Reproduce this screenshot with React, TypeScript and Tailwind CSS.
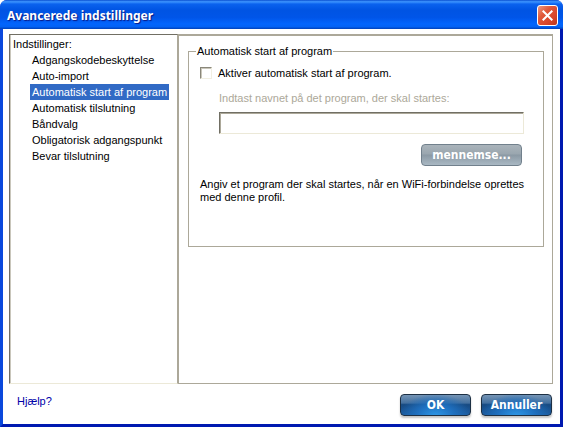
import { useState } from "react";

const pages = [
  "Adgangskodebeskyttelse",
  "Auto-import",
  "Automatisk start af program",
  "Automatisk tilslutning",
  "Båndvalg",
  "Obligatorisk adgangspunkt",
  "Bevar tilslutning",
];

function TitleBar() {
  return (
    <header className="flex h-[29px] shrink-0 items-center justify-between rounded-t-[7px] bg-[linear-gradient(180deg,#0a4fd0_0%,#3d95ff_6%,#0a62ee_14%,#0054e3_35%,#0055e8_60%,#0265fd_82%,#0262f5_92%,#0040b8_100%)] pl-[7px] pr-[5px] pt-[2px]">
      <h1 className="font-['Noto_Sans','Open_Sans',sans-serif] text-[12px] font-bold leading-4 text-white [text-shadow:1px_1px_1px_#0a1883]">
        Avancerede indstillinger
      </h1>
      <button
        type="button"
        aria-label="Luk"
        className="flex h-[21px] w-[21px] items-center justify-center rounded-[3px] border border-white bg-[linear-gradient(135deg,#ec9a83_0%,#e0593a_35%,#d8452a_70%,#b9361c_100%)]"
      >
        <svg viewBox="0 0 11 11" className="h-[11px] w-[11px]" fill="none" stroke="#fff" strokeWidth="2">
          <path d="M0.7 0.7 10.3 10.3M10.3 0.7 0.7 10.3" />
        </svg>
      </button>
    </header>
  );
}

function PageList({ selected, onSelect }: { selected: string; onSelect: (page: string) => void }) {
  return (
    <nav className="w-[169px] shrink-0 border border-b-[#ece9d8] border-l-[#716f64] border-r-[#aca899] border-t-[#716f64] pl-[3px] pt-[1px] shadow-[inset_1px_0_0_#c9c6bb]">
      <p className="leading-4">Indstillinger:</p>
      <ul className="pl-[17px]">
        {pages.map((page) => (
          <li key={page} className="flex h-4">
            <button
              type="button"
              onClick={() => onSelect(page)}
              className={
                page === selected
                  ? "whitespace-nowrap bg-[#316ac5] px-[2px] leading-4 text-white"
                  : "whitespace-nowrap px-[2px] leading-4"
              }
            >
              {page}
            </button>
          </li>
        ))}
      </ul>
    </nav>
  );
}

function ProgramSettings() {
  return (
    <fieldset className="h-[204px] border border-[#aca899] pl-[11px] pr-[19px]">
      <legend className="-ml-1 px-[1px] leading-4">Automatisk start af program</legend>
      <label className="mt-[6px] flex items-center gap-[6px] leading-4">
        <input
          type="checkbox"
          className="h-3 w-3 appearance-none border border-b-[#f1efe2] border-l-[#8a877a] border-r-[#f1efe2] border-t-[#8a877a] bg-white shadow-[inset_1px_1px_0_#cac7bb] checked:bg-[#316ac5]"
        />
        Aktiver automatisk start af program.
      </label>
      <label htmlFor="program" className="ml-[19px] mt-[9px] block leading-4 text-[#aca899]">
        Indtast navnet på det program, der skal startes:
      </label>
      <div className="ml-[19px] mt-[6px]">
        <input
          id="program"
          type="text"
          disabled
          className="block h-[22px] w-full border border-b-[#ece9d8] border-l-[#716f64] border-r-[#ece9d8] border-t-[#716f64] bg-white px-1 shadow-[inset_1px_1px_0_#aca899]"
        />
      </div>
      <div className="mt-[10px] flex justify-end pr-[2px]">
        <button
          type="button"
          className="h-[22px] w-[101px] rounded-[4px] border border-[#71808c] bg-[linear-gradient(180deg,#aab4bb_0%,#9aa6af_45%,#8b99a4_50%,#a9b8c3_100%)] font-['DejaVu_Sans_Condensed','DejaVu_Sans',sans-serif] text-[12px] font-bold leading-5 text-white"
        >
          mennemse...
        </button>
      </div>
      <p className="-mr-3 mt-[12px] leading-[13px]">
        Angiv et program der skal startes, når en WiFi-forbindelse oprettes med denne profil.
      </p>
    </fieldset>
  );
}

function DialogButton({ children }: { children: string }) {
  return (
    <button
      type="button"
      className="h-[22px] w-[71px] rounded-[4px] border border-[#1d3044] bg-[radial-gradient(ellipse_at_50%_110%,#2f9bea_0%,#1f6fbe_40%,transparent_75%),linear-gradient(180deg,#7594b5_0%,#44709f_40%,#174a82_48%,#1c5a9d_100%)] font-['DejaVu_Sans_Condensed','DejaVu_Sans',sans-serif] text-[12px] font-bold leading-5 text-white shadow-[0_2px_2px_#c4c4c4]"
    >
      {children}
    </button>
  );
}

export default function App() {
  const [selected, setSelected] = useState("Automatisk start af program");

  return (
    <div className="flex min-h-screen flex-col rounded-t-[7px] bg-[#0831d9] font-['Liberation_Sans',Arial,sans-serif] text-[11px] text-black">
      <TitleBar />
      <div className="flex flex-1 flex-col border-b-[3px] border-l-[3px] border-r-[3px] border-b-[#0019b0] border-l-[#0a48dc] border-r-[#0019b0] bg-white pl-[6px] pr-[7px] pt-[5px]">
        <div className="flex flex-1">
          <PageList selected={selected} onSelect={setSelected} />
          <main className="min-w-0 flex-1 border border-t-2 border-[#aca899] pl-[9px] pr-2 pt-[7px]">
            <ProgramSettings />
          </main>
        </div>
        <footer className="flex h-10 shrink-0 items-center justify-between pl-2">
          <a href="#" className="pb-[5px] text-[#0000a8]">
            Hjælp?
          </a>
          <div className="flex gap-[10px] pr-[1px] pt-[2px]">
            <DialogButton>OK</DialogButton>
            <DialogButton>Annuller</DialogButton>
          </div>
        </footer>
      </div>
    </div>
  );
}
